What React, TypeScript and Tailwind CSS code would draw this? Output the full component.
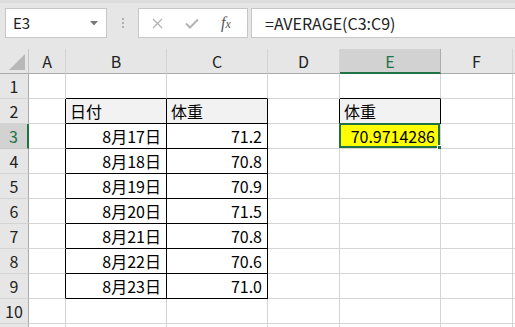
import React from 'react';

const FONT = '"Noto Sans CJK JP", "Noto Sans", sans-serif';

// column widths include the right grid line
const COLS = [
  { key: 'A', w: 'w-[37px]' },
  { key: 'B', w: 'w-[101px]' },
  { key: 'C', w: 'w-[101px]' },
  { key: 'D', w: 'w-[72px]' },
  { key: 'E', w: 'w-[101px]' },
  { key: 'F', w: 'w-[72px]' },
  { key: 'G', w: 'w-[60px]' },
];

type Cell = { text: string; align?: 'left' | 'right'; fill?: string };

const data: Record<string, Cell> = {
  B2: { text: '日付', align: 'left', fill: 'bg-[#f2f2f2]' },
  C2: { text: '体重', align: 'left', fill: 'bg-[#f2f2f2]' },
  E2: { text: '体重', align: 'left', fill: 'bg-[#f2f2f2]' },
  E3: { text: '70.9714286', align: 'right', fill: 'bg-[#ffff00]' },
};

const weights = ['71.2', '70.8', '70.9', '71.5', '70.8', '70.6', '71.0'];
weights.forEach((w, i) => {
  data['B' + (i + 3)] = { text: `8月${17 + i}日`, align: 'right' };
  data['C' + (i + 3)] = { text: w, align: 'right' };
});

function inTable(col: string, row: number) {
  return ((col === 'B' || col === 'C') && row >= 2 && row <= 9) || (col === 'E' && row === 2);
}

function borderClass(col: string, row: number) {
  const next = String.fromCharCode(col.charCodeAt(0) + 1);
  const right = inTable(col, row) || inTable(next, row);
  const bottom = inTable(col, row) || inTable(col, row + 1);
  return [
    right ? 'border-r-black' : 'border-r-[#d4d4d4]',
    bottom ? 'border-b-black' : 'border-b-[#d4d4d4]',
  ].join(' ');
}

function Toolbar() {
  return (
    <div className="h-[49px] bg-[#e6e6e6] border-t-[3px] border-t-[#dcdcdc] pt-[5px] flex items-start">
      <div className="ml-[5px] shrink-0 w-[102px] h-[30px] bg-white border border-[#c6c6c6] flex items-center justify-between pl-[7px] pr-[8px]">
        <span className="text-[15px] text-[#222]">E3</span>
        <svg width="8" height="5" viewBox="0 0 8 5">
          <path d="M0 0 L8 0 L4 4.5 Z" fill="#7a7a7a" />
        </svg>
      </div>
      <div className="w-[31px] shrink-0 h-[30px] flex flex-col items-center justify-center gap-[2px]">
        <div className="w-[2px] h-[2px] bg-[#b0b0b0]" />
        <div className="w-[2px] h-[2px] bg-[#b0b0b0]" />
        <div className="w-[2px] h-[2px] bg-[#b0b0b0]" />
      </div>
      <div className="w-[110px] shrink-0 h-[30px] bg-white border border-[#c6c6c6] flex items-center">
        <svg className="ml-[13px]" width="11" height="11" viewBox="0 0 11 11">
          <path d="M1 1 L10 10 M10 1 L1 10" stroke="#b3b3b3" strokeWidth="1.3" />
        </svg>
        <svg className="ml-[22px]" width="14" height="11" viewBox="0 0 14 11">
          <path d="M1 5.5 L5 9.5 L13 1.5" stroke="#b3b3b3" strokeWidth="2" fill="none" />
        </svg>
        <span
          className="ml-[22px] text-[16px] italic text-[#555]"
          style={{ fontFamily: '"Liberation Serif", serif' }}
        >
          f<span className="text-[12px]">x</span>
        </span>
      </div>
      <div className="ml-[3px] flex-1 h-[30px] bg-white border border-[#c6c6c6] border-r-0 flex items-center pl-[13px]">
        <span className="text-[16px] text-[#222]">=AVERAGE(C3:C9)</span>
      </div>
    </div>
  );
}

function ColumnHeader() {
  return (
    <div className="flex h-[25px]">
      <div className="w-[29px] shrink-0 h-[25px] border-r border-r-[#c6c6c6] border-b border-b-[#ababab] flex items-end justify-end p-[3px]">
        <svg width="16" height="16" viewBox="0 0 16 16">
          <path d="M16 0 L16 16 L0 16 Z" fill="#b8b8b8" />
        </svg>
      </div>
      {COLS.map((c) =>
        c.key === 'E' ? (
          <div
            key={c.key}
            className={`${c.w} shrink-0 h-[25px] bg-[#d2d2d2] border-r border-r-[#ababab] border-b-2 border-b-[#217346] flex items-center justify-center text-[16px] text-[#217346]`}
          >
            {c.key}
          </div>
        ) : (
          <div
            key={c.key}
            className={`${c.w} shrink-0 h-[25px] border-r border-r-[#d4d4d4] border-b border-b-[#ababab] flex items-center justify-center text-[16px] text-[#222]`}
          >
            {c.key === 'G' ? '' : c.key}
          </div>
        )
      )}
    </div>
  );
}

function Row({ row }: { row: number }) {
  const selected = row === 3;
  return (
    <div className="flex h-[25px]">
      <div
        className={
          selected
            ? 'w-[29px] shrink-0 h-[25px] bg-[#d2d2d2] border-r-2 border-r-[#217346] border-b border-b-[#c6c6c6] flex items-center justify-center text-[16px] text-[#217346]'
            : 'w-[29px] shrink-0 h-[25px] border-r border-r-[#ababab] border-b border-b-[#d4d4d4] flex items-center justify-center text-[16px] text-[#222]'
        }
      >
        {row <= 10 ? row : ''}
      </div>
      {COLS.map((c) => {
        const cell = data[c.key + row];
        return (
          <div
            key={c.key}
            className={`${c.w} shrink-0 h-[25px] relative border-r border-b ${borderClass(c.key, row)} ${cell?.fill ?? 'bg-white'} flex items-center ${
              cell?.align === 'right' ? 'justify-end pr-[5px]' : 'justify-start pl-[4px]'
            } text-[16px] text-black`}
          >
            {cell?.text}
            {c.key === 'E' && row === 3 && (
              <>
                <div className="absolute -left-[1px] -top-[1px] right-0 bottom-0 border-2 border-[#217346] pointer-events-none" />
                <div className="absolute -right-[3px] -bottom-[3px] w-[6px] h-[6px] bg-[#217346] border border-white" />
              </>
            )}
          </div>
        );
      })}
    </div>
  );
}

export default function App() {
  return (
    <div className="w-[515px] h-[327px] overflow-hidden bg-[#e6e6e6]" style={{ fontFamily: FONT }}>
      <Toolbar />
      <ColumnHeader />
      {[1, 2, 3, 4, 5, 6, 7, 8, 9, 10, 11].map((r) => (
        <Row key={r} row={r} />
      ))}
    </div>
  );
}
